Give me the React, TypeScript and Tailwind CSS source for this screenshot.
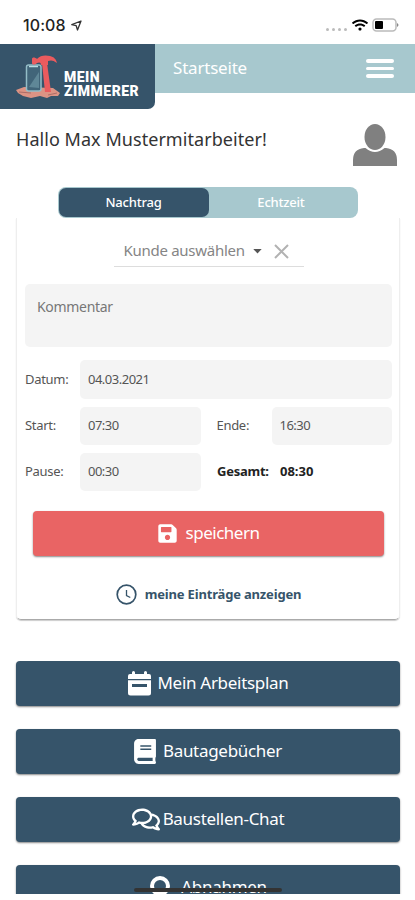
import type { ReactNode } from "react";
import { FaBook, FaRegComments, FaSave, FaWifi } from "react-icons/fa";

function LogoIcon() {
  return (
    <svg width="46" height="46" viewBox="0 0 46 46" className="shrink-0">
      <path d="M1 36 9 33 38 34 45 39 43 42 36 42 32 44 25 42 16 44 8 42 3 39Z" fill="#dc9384" />
      <path d="m4 38 12 1m17 2 9-2" stroke="#ac6d68" strokeWidth="1" />
      <rect x="11.500" y="11" width="14.500" height="26" rx="2" fill="#416579" stroke="#93bdc7" strokeWidth="1.500" />
      <path d="M14 12.500h9" stroke="#b8dce2" strokeWidth="1.500" />
      <path d="m14 33 10-15v16z" fill="#5f8797" />
      <path d="M17 5c0-2 3-2 5 0 3-4 9-4 13-3 4 1 6 3 7 7-4-3-6-3-9-2v4h-7c0-3-2-3-4-2-2 2-5 2-5 0Z" fill="#ea5b5e" />
      <path d="M27 9h5l4 29h-6Z" fill="#ea5b5e" />
    </svg>
  );
}

function CalendarIcon() {
  return (
    <svg width="23" height="25" viewBox="0 0 23 25" className="mr-[7px] mt-[2px]" fill="white">
      <path d="M2 3h2V1.500a1.200 1.200 0 0 1 3 0V3h9V1.500a1.200 1.200 0 0 1 3 0V3h2q2 0 2 2v3H0V5q0-2 2-2Z" />
      <path fillRule="evenodd" d="M0 9.300h23V22q0 2.500-2.500 2.500h-18Q0 24.500 0 22ZM4 13v3h15v-3Z" />
    </svg>
  );
}

function StatusBar() {
  return (
    <div className="flex h-[44px] shrink-0 items-start justify-between pl-[23px] pr-[16px]">
      <div className="flex items-center gap-[5px] pt-[15px]">
        <span className="font-['Inter',sans-serif] text-[16px] font-medium leading-[21px] tracking-[0.1px] text-[#222]">
          10:08
        </span>
        <svg width="11" height="11" viewBox="0 0 11 11" fill="none" stroke="#333" strokeWidth="1.300" strokeLinejoin="round">
          <path d="M10 1 .8 4.700l4.400 1L6.500 10Z" />
        </svg>
      </div>
      <div className="flex items-center pt-[18px]">
        <div className="mr-[5px] mt-[8px] flex gap-[3px]">
          <i className="h-[3px] w-[3px] rounded-full bg-[#bbb]" />
          <i className="h-[3px] w-[3px] rounded-full bg-[#bbb]" />
          <i className="h-[3px] w-[3px] rounded-full bg-[#bbb]" />
          <i className="h-[3px] w-[3px] rounded-full bg-[#bbb]" />
        </div>
        <FaWifi className="h-[14px] w-[16px] text-black" />
        <svg width="27" height="14" viewBox="0 0 27 14" className="ml-[4px]">
          <rect x="1" y="1" width="23" height="12" rx="3.500" fill="none" stroke="#bbb" strokeWidth="1.500" />
          <path d="M25 5q3 2 0 4z" fill="#888" />
          <rect x="3" y="3" width="8" height="8" rx="1" fill="#000" />
        </svg>
      </div>
    </div>
  );
}

function Header() {
  return (
    <header className="flex h-[65px] shrink-0 items-start">
      <div className="flex h-[65px] w-[155px] rounded-br-[7px] bg-[#36546a] pl-[15px] pt-[10px]">
        <LogoIcon />
        <div className="ml-[3px] mt-[16px] font-['Roboto',sans-serif] text-[14px] font-black leading-[14px] tracking-[0.5px] text-white">
          MEIN
          <br />
          ZIMMERER
        </div>
      </div>
      <div className="flex h-[49px] flex-1 items-center justify-between bg-[#a7c8ce] pl-[18px] pr-[21px]">
        <span className="pb-[2px] text-[17px] tracking-[-0.2px] text-white">Startseite</span>
        <div className="flex w-[28px] flex-col gap-[4px]">
          <i className="h-[3.500px] rounded-full bg-white" />
          <i className="h-[3.500px] rounded-full bg-white" />
          <i className="h-[3.500px] rounded-full bg-white" />
        </div>
      </div>
    </header>
  );
}

function Label({ children }: { children: string }) {
  return <span className="w-[55px] shrink-0 text-[13px] tracking-[-0.3px] text-[#555]">{children}</span>;
}

function Field({ value }: { value: string }) {
  return (
    <div className="flex h-full flex-1 items-center rounded-[5px] bg-[#f4f4f4] px-[8px] text-[13px] tracking-[-0.5px] text-[#555]">
      {value}
    </div>
  );
}

function EntryCard() {
  return (
    <section className="ml-[16px] mr-[15px] flex h-[402px] shrink-0 flex-col rounded-b-[5px] border-x border-b border-x-[#eee] border-b-[#aaa] pl-[8px] pr-[7px] shadow-[0_1px_1px_#ccc]">
      <div className="mx-auto mt-[16px] flex h-[33px] w-[190px] shrink-0 items-center border-b border-[#ddd] pl-[10px]">
        <span className="whitespace-nowrap text-[15px] tracking-[-0.28px] text-[#858585]">Kunde auswählen</span>
        <svg width="9" height="5" viewBox="0 0 10 6" className="ml-[8px] mt-[3px] shrink-0">
          <path d="M0 0h10L5 5.500Z" fill="#555" />
        </svg>
        <svg width="15" height="15" viewBox="0 0 15 15" className="ml-[12px] mt-[2px] shrink-0" stroke="#b2b2b2" strokeWidth="2">
          <path d="m1 1 13 13M14 1 1 14" />
        </svg>
      </div>
      <div className="mt-[17px] h-[63px] shrink-0 rounded-[5px] bg-[#f4f4f4] px-[12px] pt-[12px] text-[14px] leading-[21px] tracking-[-0.3px] text-[#777]">
        Kommentar
      </div>
      <div className="mt-[13px] flex h-[39px] shrink-0 items-center">
        <Label>Datum:</Label>
        <Field value="04.03.2021" />
      </div>
      <div className="mt-[8px] flex h-[38px] shrink-0 items-center">
        <Label>Start:</Label>
        <Field value="07:30" />
        <span className="w-[16px]" />
        <Label>Ende:</Label>
        <Field value="16:30" />
      </div>
      <div className="mt-[8px] flex h-[38px] shrink-0 items-center">
        <Label>Pause:</Label>
        <Field value="00:30" />
        <div className="flex w-[191px] pl-[16px] text-[13px] font-bold tracking-[-0.25px] text-[#222]">
          <span className="w-[63px]">Gesamt:</span>
          <span className="tracking-[0px]">08:30</span>
        </div>
      </div>
      <button className="mx-[8px] mt-[20px] flex h-[45px] shrink-0 items-center justify-center gap-[9px] rounded-[4px] bg-[#e96464] pb-[2px] text-[17px] text-white shadow-[0_1px_2px_#888]">
        <FaSave className="mt-[2px] h-[21px] w-[19px]" />
        <span className="tracking-[-0.5px]">speichern</span>
      </button>
      <div className="mt-[28px] flex items-center justify-center gap-[8px] text-[#36546a]">
        <svg width="21" height="21" viewBox="0 0 21 21" fill="none" stroke="currentColor" strokeWidth="1.700">
          <circle cx="10.500" cy="10.500" r="9.300" />
          <path d="M10.500 6v5.500l3.800 2" strokeWidth="1.300" />
        </svg>
        <span className="text-[13px] font-bold leading-[21px] tracking-[-0.17px]">meine Einträge anzeigen</span>
      </div>
    </section>
  );
}

function MenuButton({ icon, children }: { icon: ReactNode; children: string }) {
  return (
    <button className="flex h-[45px] shrink-0 items-center justify-center rounded-[4px] bg-[#36546a] pb-[2px] text-[17px] text-white shadow-[0_1px_2px_#888]">
      {icon}
      <span className="tracking-[-0.3px]">{children}</span>
    </button>
  );
}

export default function App() {
  return (
    <div className="relative flex h-[900px] w-[415px] flex-col overflow-hidden bg-white font-['Noto_Sans',sans-serif]">
      <StatusBar />
      <Header />
      <div className="flex h-[78px] shrink-0 items-start justify-between pl-[16px] pr-[18px]">
        <h1 className="pt-[17px] text-[18px] leading-[27px] tracking-[0.05px] text-[#333]">Hallo Max Mustermitarbeiter!</h1>
        <svg width="44" height="43" viewBox="0 0 44 43" className="mt-[14px]" fill="#808080">
          <ellipse cx="22" cy="14" rx="10.500" ry="13" />
          <path d="M0 43V37Q0 26 11 25H12.500Q22 33 31.500 25H33Q44 26 44 37V43Z" />
        </svg>
      </div>
      <div className="mx-auto flex h-[31px] w-[300px] shrink-0 rounded-[8px] bg-[#a7c8ce] p-px text-[13px] font-medium tracking-[-0.2px] text-white">
        <div className="flex w-[150px] items-center justify-center rounded-[7px] bg-[#36546a]">Nachtrag</div>
        <div className="flex flex-1 items-center justify-center pr-[3px]">Echtzeit</div>
      </div>
      <EntryCard />
      <nav className="ml-[16px] mr-[15px] mt-[41px] flex h-[233px] shrink-0 flex-col gap-[23px] overflow-x-visible overflow-y-clip">
        <MenuButton icon={<CalendarIcon />}>Mein Arbeitsplan</MenuButton>
        <MenuButton icon={<FaBook className="mr-[7px] mt-[2px] h-[25px] w-[22px]" />}>Bautagebücher</MenuButton>
        <MenuButton icon={<FaRegComments className="mr-[3px] mt-[2px] h-[25px] w-[28px]" />}>Baustellen-Chat</MenuButton>
        <MenuButton
          icon={
            <svg width="22" height="25" viewBox="0 0 22 25" className="mr-[10px]" fill="none" stroke="white" strokeWidth="4">
              <circle cx="11" cy="12" r="8" />
            </svg>
          }
        >
          Abnahmen
        </MenuButton>
      </nav>
      <div className="absolute left-[134px] top-[888px] h-[4px] w-[148px] rounded-full bg-[#333]" />
    </div>
  );
}
